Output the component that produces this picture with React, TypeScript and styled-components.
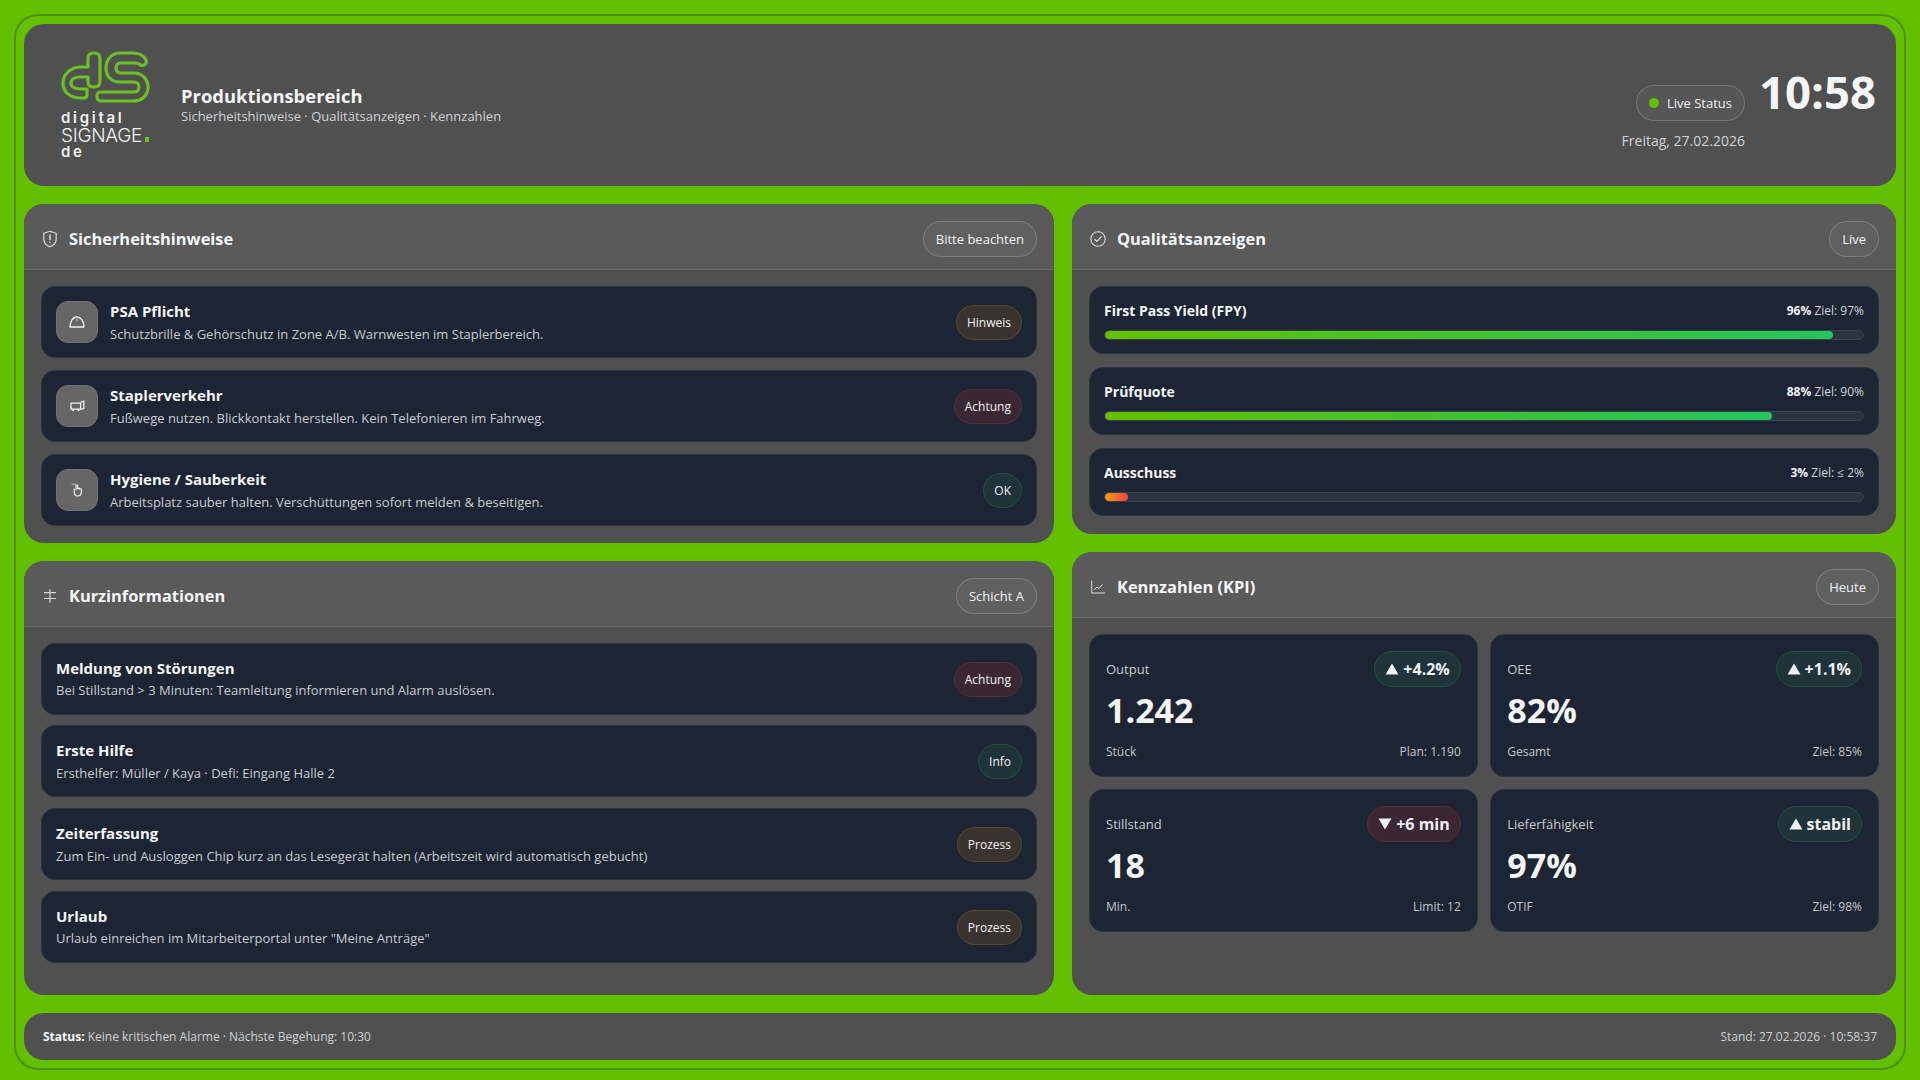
import React from "react";
import styled, { createGlobalStyle } from "styled-components";

const Global = createGlobalStyle`
  html, body { margin: 0; padding: 0; height: 100%; background: #62c000; }
  body { font-family: "Open Sans", "Noto Sans", sans-serif; color: #f2f4f7; overflow: hidden; }
  * { box-sizing: border-box; }
`;

const Frame = styled.div`
  margin: 14px 14px 10px;
  height: 1056px;
  border: 2px solid #4f8f14;
  border-radius: 24px;
  padding: 8px;
  display: flex;
  flex-direction: column;
  gap: 18px;
`;

const Panel = styled.section`
  background: #505050;
  border-radius: 20px;
  overflow: hidden;
  display: flex;
  flex-direction: column;
`;

const Header = styled(Panel)`
  height: 162px;
  flex: none;
  flex-direction: row;
  align-items: center;
  justify-content: space-between;
  padding: 0 20px 0 37px;
`;

const Brand = styled.div`
  display: flex;
  align-items: center;
  gap: 32px;
`;

const Logo = styled.div`
  width: 88px;
  display: flex;
  flex-direction: column;
  padding-bottom: 5.5px;
`;

const LogoWordTop = styled.div`
  font-family: Inter, sans-serif;
  font-size: 15px;
  font-weight: 600;
  letter-spacing: 2.7px;
  line-height: 16px;
  color: #f0f0f0;
  margin-top: 6.5px;
`;

const LogoWordBottom = styled(LogoWordTop)`
  margin-top: 0;
`;

const LogoWordMain = styled.div`
  font-family: Inter, sans-serif;
  font-size: 19px;
  font-weight: 300;
  line-height: 16px;
  letter-spacing: -0.3px;
  color: #f0f0f0;
  white-space: nowrap;
  display: flex;
  align-items: baseline;
  margin-top: 2px;
`;

const LogoDot = styled.span`
  width: 5px;
  height: 5px;
  margin-left: 3px;
  background: #6cc024;
`;

const TitleBlock = styled.div`
  display: flex;
  flex-direction: column;
  margin-bottom: 2px;
`;

const PageTitle = styled.h1`
  margin: 0;
  font-size: 18.4px;
  line-height: 24px;
  font-weight: 700;
  color: #f5f6f8;
`;

const PageSub = styled.div`
  font-size: 13px;
  line-height: 16px;
  color: #cfd2d6;
`;

const HeaderRight = styled.div`
  display: flex;
  align-items: flex-start;
  gap: 14px;
  padding-top: 9px;
`;

const LiveBlock = styled.div`
  display: flex;
  flex-direction: column;
  align-items: flex-end;
  gap: 10px;
  padding-top: 15px;
`;

const Clock = styled.div`
  font-size: 45.5px;
  line-height: 42px;
  font-weight: 700;
  color: #f4f5f7;
`;

const DateText = styled.div`
  font-size: 14px;
  line-height: 19px;
  color: #cfd2d6;
`;

const Dot = styled.span`
  width: 10px;
  height: 10px;
  border-radius: 50%;
  background: #62c000;
`;

const Pill = styled.div`
  height: 36px;
  padding: 0 12px;
  border-radius: 18px;
  border: 1px solid rgba(255, 255, 255, 0.18);
  background: rgba(255, 255, 255, 0.04);
  display: inline-flex;
  align-items: center;
  gap: 8px;
  font-size: 13px;
  color: #f0f2f5;
  flex: none;
`;

const Columns = styled.main`
  flex: 1;
  min-height: 0;
  display: grid;
  grid-template-columns: 1.25fr 1fr;
  gap: 18px;
`;

const Column = styled.div`
  display: flex;
  flex-direction: column;
  gap: 18px;
  min-height: 0;
`;

const GrowPanel = styled(Panel)`
  flex: 1;
`;

const PanelHead = styled.header`
  height: 66px;
  flex: none;
  padding: 5px 17px 0 18px;
  display: flex;
  align-items: center;
  justify-content: space-between;
  background: #5a5a5a;
  border-bottom: 1px solid #6a6a6a;
`;

const PanelTitle = styled.h2`
  margin: 0;
  display: flex;
  align-items: center;
  gap: 11px;
  font-size: 16.4px;
  line-height: 22px;
  font-weight: 700;
  color: #f4f5f7;
  svg { flex: none; color: #d6d8db; }
`;

const PanelBody = styled.div<{ $gap?: number; $pb?: number }>`
  padding: 16px 17px ${(p) => p.$pb ?? 17}px;
  display: flex;
  flex-direction: column;
  gap: ${(p) => p.$gap ?? 12.5}px;
`;

const Card = styled.div`
  background: #1d2433;
  border: 1px solid #2c3340;
  border-radius: 14px;
`;

const NoteCard = styled(Card)<{ $h: number }>`
  height: ${(p) => p.$h}px;
  padding: 0 14px;
  display: flex;
  align-items: center;
  gap: 12px;
`;

const Chip = styled.div`
  width: 42px;
  height: 42px;
  flex: none;
  border-radius: 12px;
  background: #666666;
  border: 1px solid #727272;
  display: flex;
  align-items: center;
  justify-content: center;
  color: #f0f0f0;
`;

const NoteText = styled.div`
  flex: 1;
  min-width: 0;
  display: flex;
  flex-direction: column;
  gap: 1.5px;
`;

const NoteTitle = styled.div`
  font-size: 15px;
  line-height: 22px;
  font-weight: 700;
  color: #f4f5f7;
`;

const NoteSub = styled.div`
  font-size: 13px;
  line-height: 20px;
  color: #c9ccd1;
`;

const tones = {
  warn: { bg: "#3a332f", border: "#5a482a" },
  danger: { bg: "#3a2733", border: "#5a2c38" },
  ok: { bg: "#1f3338", border: "#1f5442" },
};
type Tone = keyof typeof tones;

const Tag = styled.span<{ $tone: Tone }>`
  height: 35px;
  padding: 0 10px;
  margin-top: 1px;
  border-radius: 18px;
  display: inline-flex;
  align-items: center;
  flex: none;
  font-size: 12px;
  color: #f0f2f5;
  background: ${(p) => tones[p.$tone].bg};
  border: 1px solid ${(p) => tones[p.$tone].border};
`;

const MeterCard = styled(Card)`
  height: 68px;
  padding: 11px 14px 0;
`;

const MeterRow = styled.div`
  display: flex;
  justify-content: space-between;
  align-items: center;
  height: 24px;
  margin-bottom: 8px;
`;

const MeterTitle = styled.div`
  font-size: 14px;
  font-weight: 700;
  color: #f4f5f7;
`;

const MeterValue = styled.div`
  font-size: 12px;
  color: #d2d5d9;
  b { font-weight: 700; color: #f0f2f5; }
`;

const Track = styled.div`
  height: 10px;
  border-radius: 5px;
  background: #2b3240;
  border: 1px solid #3a404c;
  overflow: hidden;
`;

const Fill = styled.div<{ $bad?: boolean }>`
  height: 100%;
  border-radius: 5px;
  background: ${(p) =>
    p.$bad
      ? "linear-gradient(90deg, #f59e0b, #ef4444)"
      : "linear-gradient(90deg, #62c000, #22c55e)"};
`;

const KpiGrid = styled.div`
  display: grid;
  grid-template-columns: 1fr 1fr;
  gap: 12px 12.5px;
`;

const KpiCard = styled(Card)`
  height: 143px;
  padding: 16px 16px 0;
  display: flex;
  flex-direction: column;
`;

const KpiTop = styled.div`
  display: flex;
  align-items: center;
  justify-content: space-between;
  height: 36px;
`;

const KpiLabel = styled.div`
  font-size: 13px;
  color: #c9ccd1;
`;

const Trend = styled.div<{ $tone: Tone }>`
  height: 36px;
  padding: 0 10px;
  border-radius: 18px;
  display: inline-flex;
  align-items: center;
  gap: 4px;
  font-size: 16px;
  font-weight: 700;
  color: #eef0f3;
  background: ${(p) => tones[p.$tone].bg};
  border: 1px solid ${(p) => tones[p.$tone].border};
  svg { flex: none; }
`;

const KpiValue = styled.div`
  font-size: 34px;
  line-height: 46px;
  font-weight: 700;
  color: #f4f5f7;
`;

const KpiFoot = styled.div`
  display: flex;
  justify-content: space-between;
  font-size: 12px;
  line-height: 18px;
  color: #c4c7cc;
  margin-top: 10px;
`;

const Footer = styled(Panel)`
  height: 47px;
  flex: none;
  flex-direction: row;
  align-items: center;
  justify-content: space-between;
  padding: 0 19px;
  font-size: 12px;
  color: #cfd2d6;
  b { color: #f4f5f7; font-weight: 700; }
`;

const LogoMark = () => (
  <svg width="100" height="58" viewBox="0 0 100 58" fill="none" style={{ marginLeft: -6, display: "block" }}>
    <g stroke="#6cc024" strokeWidth="3.2" strokeLinejoin="round">
      <path d="M45 13V36C45 40 43 42 39 42C35 42 33 40 33 37V32H25C20 32 16 34 16 38C16 42 20 44 25 44H32V50C32 52 30.5 53 28 53H26C15 53 8 47 8 38C8 29 16 22 26 22H33V13C33 9.5 35.5 8 39 8C42.5 8 45 9.5 45 13Z" />
      <path d="M65 8H78C84 8 89 11 91 15C92 17 91 19 89 20C87 21 85 20 84 19C83 18 81 18 78 18H66C63 18 61 20 61 23C61 26 63 28 66 28H79C87 28 93 34 93 42C93 50 87 56 79 56H46C43 56 42 54 42 51C42 48 43 47 46 47H79C82 47 84 45 84 42C84 39 82 37 79 37H65C56 37 51 31 51 23C51 14 57 8 65 8Z" />
    </g>
  </svg>
);

const ShieldIcon = () => (
  <svg width="16" height="18" viewBox="0 0 16 18" fill="none" stroke="currentColor" strokeWidth="1.2" strokeLinejoin="round" strokeLinecap="round">
    <path d="M8 1.2L14.2 3.2V9C14.2 13 11.5 15.6 8 16.8C4.5 15.6 1.8 13 1.8 9V3.2Z" />
    <path d="M8 5V9.6M8 12.2V12.3" strokeWidth="1.6" />
  </svg>
);

const CheckIcon = () => (
  <svg width="16" height="16" viewBox="0 0 16 16" fill="none" stroke="currentColor" strokeWidth="1.1" strokeLinecap="round" strokeLinejoin="round">
    <circle cx="8" cy="8" r="7.2" />
    <path d="M4.8 8.4L7 10.4L11.2 5.8" strokeWidth="1.3" />
  </svg>
);

const InfoIcon = () => (
  <svg width="16" height="14" viewBox="0 0 16 14" fill="none" stroke="currentColor" strokeWidth="1.2">
    <path d="M2 3.7H14M2 9.5H14M8 0.5V13.5" />
  </svg>
);

const ChartIcon = () => (
  <svg width="16" height="14" viewBox="0 0 16 14" fill="none" stroke="currentColor" strokeWidth="1">
    <path d="M1.7 0.5V13H15" />
    <path d="M4 10L7 7L9 8.5L12.5 4.5" />
  </svg>
);

const HatIcon = () => (
  <svg width="16" height="12" viewBox="0 0 16 12" fill="none" stroke="currentColor" strokeWidth="1.3" strokeLinejoin="round">
    <path d="M1 11C1 5.4 4 1 8 1C12 1 15 5.4 15 11Z" />
    <path d="M8 1V5.4" stroke="#aaaaaa" />
  </svg>
);

const TruckIcon = () => (
  <svg width="15" height="12" viewBox="0 0 15 12" fill="none" stroke="currentColor" strokeWidth="1.3" strokeLinejoin="round">
    <path d="M1 3.2H10.6V9.2H1Z" />
    <path d="M10.6 2.4L13.8 1V8.6L10.6 9.2" />
    <path d="M3 9.4V11M8.6 9.4V11" strokeWidth="1.8" />
  </svg>
);

const HandIcon = () => (
  <svg width="12" height="14" viewBox="0 0 12 14" fill="none" stroke="currentColor" strokeWidth="1.2" strokeLinejoin="round" strokeLinecap="round">
    <path d="M1 1.2H4.6" stroke="#aaaaaa" />
    <path d="M3.2 6V8.8C3.2 11.4 4.6 13 6.6 13C9 13 10.4 11.4 10.4 9V6.6C10.4 5.6 9 5.4 8.6 6.2C8.6 5 7 4.8 6.6 5.8V2.6C6.6 1.8 5 1.8 5 2.6V6.6" />
  </svg>
);

const Arrow = ({ down }: { down?: boolean }) => (
  <svg width="14" height="12" viewBox="0 0 14 12" fill="#eef0f3">
    <path d={down ? "M0.5 0.5H13.5L7 11.5Z" : "M7 0.5L13.5 11.5H0.5Z"} />
  </svg>
);

const safety = [
  { icon: <HatIcon />, title: "PSA Pflicht", sub: "Schutzbrille & Gehörschutz in Zone A/B. Warnwesten im Staplerbereich.", tag: "Hinweis", tone: "warn" as Tone },
  { icon: <TruckIcon />, title: "Staplerverkehr", sub: "Fußwege nutzen. Blickkontakt herstellen. Kein Telefonieren im Fahrweg.", tag: "Achtung", tone: "danger" as Tone },
  { icon: <HandIcon />, title: "Hygiene / Sauberkeit", sub: "Arbeitsplatz sauber halten. Verschüttungen sofort melden & beseitigen.", tag: "OK", tone: "ok" as Tone },
];

const infos = [
  { title: "Meldung von Störungen", sub: "Bei Stillstand > 3 Minuten: Teamleitung informieren und Alarm auslösen.", tag: "Achtung", tone: "danger" as Tone },
  { title: "Erste Hilfe", sub: "Ersthelfer: Müller / Kaya · Defi: Eingang Halle 2", tag: "Info", tone: "ok" as Tone },
  { title: "Zeiterfassung", sub: "Zum Ein- und Ausloggen Chip kurz an das Lesegerät halten (Arbeitszeit wird automatisch gebucht)", tag: "Prozess", tone: "warn" as Tone },
  { title: "Urlaub", sub: 'Urlaub einreichen im Mitarbeiterportal unter "Meine Anträge"', tag: "Prozess", tone: "warn" as Tone },
];

const meters = [
  { title: "First Pass Yield (FPY)", val: "96%", goal: "Ziel: 97%", pct: 96 },
  { title: "Prüfquote", val: "88%", goal: "Ziel: 90%", pct: 88 },
  { title: "Ausschuss", val: "3%", goal: "Ziel: ≤ 2%", pct: 3, bad: true },
];

const kpis = [
  { label: "Output", trend: "+4.2%", value: "1.242", unit: "Stück", goal: "Plan: 1.190" },
  { label: "OEE", trend: "+1.1%", value: "82%", unit: "Gesamt", goal: "Ziel: 85%" },
  { label: "Stillstand", trend: "+6 min", value: "18", unit: "Min.", goal: "Limit: 12", down: true },
  { label: "Lieferfähigkeit", trend: "stabil", value: "97%", unit: "OTIF", goal: "Ziel: 98%" },
];

export default function App() {
  return (
    <>
      <Global />
      <Frame>
        <Header>
          <Brand>
            <Logo>
              <LogoMark />
              <LogoWordTop>digital</LogoWordTop>
              <LogoWordMain>
                SIGNAGE<LogoDot />
              </LogoWordMain>
              <LogoWordBottom>de</LogoWordBottom>
            </Logo>
            <TitleBlock>
              <PageTitle>Produktionsbereich</PageTitle>
              <PageSub>Sicherheitshinweise · Qualitätsanzeigen · Kennzahlen</PageSub>
            </TitleBlock>
          </Brand>
          <HeaderRight>
            <LiveBlock>
              <Pill>
                <Dot />
                Live Status
              </Pill>
              <DateText>Freitag, 27.02.2026</DateText>
            </LiveBlock>
            <Clock>10:58</Clock>
          </HeaderRight>
        </Header>

        <Columns>
          <Column>
            <Panel>
              <PanelHead>
                <PanelTitle>
                  <ShieldIcon />
                  Sicherheitshinweise
                </PanelTitle>
                <Pill>Bitte beachten</Pill>
              </PanelHead>
              <PanelBody>
                {safety.map((s) => (
                  <NoteCard $h={71.5} key={s.title}>
                    <Chip>{s.icon}</Chip>
                    <NoteText>
                      <NoteTitle>{s.title}</NoteTitle>
                      <NoteSub>{s.sub}</NoteSub>
                    </NoteText>
                    <Tag $tone={s.tone}>{s.tag}</Tag>
                  </NoteCard>
                ))}
              </PanelBody>
            </Panel>
            <GrowPanel>
              <PanelHead>
                <PanelTitle>
                  <InfoIcon />
                  Kurzinformationen
                </PanelTitle>
                <Pill>Schicht A</Pill>
              </PanelHead>
              <PanelBody $gap={10.7}>
                {infos.map((s) => (
                  <NoteCard $h={72} key={s.title}>
                    <NoteText>
                      <NoteTitle>{s.title}</NoteTitle>
                      <NoteSub>{s.sub}</NoteSub>
                    </NoteText>
                    <Tag $tone={s.tone}>{s.tag}</Tag>
                  </NoteCard>
                ))}
              </PanelBody>
            </GrowPanel>
          </Column>
          <Column>
            <Panel>
              <PanelHead>
                <PanelTitle>
                  <CheckIcon />
                  Qualitätsanzeigen
                </PanelTitle>
                <Pill>Live</Pill>
              </PanelHead>
              <PanelBody $gap={13} $pb={18}>
                {meters.map((m) => (
                  <MeterCard key={m.title}>
                    <MeterRow>
                      <MeterTitle>{m.title}</MeterTitle>
                      <MeterValue>
                        <b>{m.val}</b> {m.goal}
                      </MeterValue>
                    </MeterRow>
                    <Track>
                      <Fill $bad={m.bad} style={{ width: `${m.pct}%` }} />
                    </Track>
                  </MeterCard>
                ))}
              </PanelBody>
            </Panel>
            <GrowPanel>
              <PanelHead>
                <PanelTitle>
                  <ChartIcon />
                  Kennzahlen (KPI)
                </PanelTitle>
                <Pill>Heute</Pill>
              </PanelHead>
              <PanelBody>
                <KpiGrid>
                  {kpis.map((k) => (
                    <KpiCard key={k.label}>
                      <KpiTop>
                        <KpiLabel>{k.label}</KpiLabel>
                        <Trend $tone={k.down ? "danger" : "ok"}>
                          <Arrow down={k.down} />
                          {k.trend}
                        </Trend>
                      </KpiTop>
                      <KpiValue>{k.value}</KpiValue>
                      <KpiFoot>
                        <span>{k.unit}</span>
                        <span>{k.goal}</span>
                      </KpiFoot>
                    </KpiCard>
                  ))}
                </KpiGrid>
              </PanelBody>
            </GrowPanel>
          </Column>
        </Columns>

        <Footer>
          <span>
            <b>Status:</b> Keine kritischen Alarme · Nächste Begehung: 10:30
          </span>
          <span>Stand: 27.02.2026 · 10:58:37</span>
        </Footer>
      </Frame>
    </>
  );
}
